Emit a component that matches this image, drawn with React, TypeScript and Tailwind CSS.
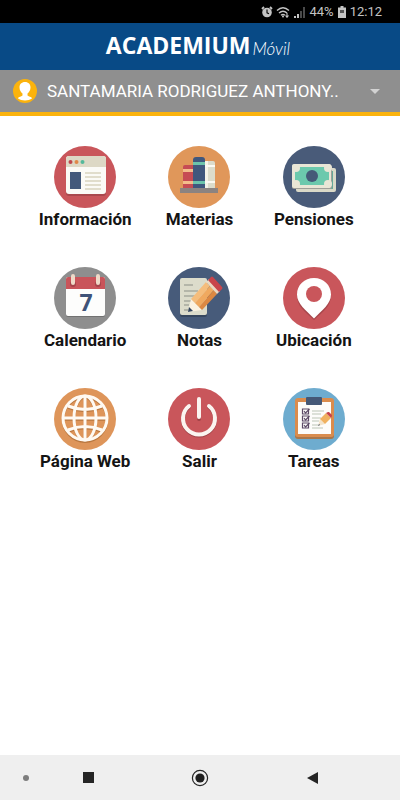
import React, { useState } from 'react';

function InfoIcon() {
  return (
    <svg viewBox="0 0 62 62" className="size-full">
      <circle cx="31" cy="31" r="31" fill="#c9565b" />
      <rect x="12" y="12" width="40" height="38" rx="3" fill="#a9484d" />
      <rect x="12" y="10" width="40" height="38" rx="3" fill="#fbfaf6" />
      <path d="M12 21v-8a3 3 0 0 1 3-3h34a3 3 0 0 1 3 3v8z" fill="#ddd8c5" />
      <circle cx="16.5" cy="16" r="2" fill="#c0474d" />
      <circle cx="22.5" cy="16" r="2" fill="#e0884a" />
      <circle cx="28.5" cy="16" r="2" fill="#55b99b" />
      <rect x="16" y="26" width="11" height="17" fill="#44597b" />
      <path d="M31 27h16M31 31h16M31 35h16M31 39h16M31 43h16" stroke="#d9d4be" strokeWidth="1.4" />
    </svg>
  );
}

function BooksIcon() {
  return (
    <svg viewBox="0 0 62 62" className="size-full">
      <circle cx="31" cy="31" r="31" fill="#e0975a" />
      <path d="M15 42V21q0-2 2-2h8v23z" fill="#c64c54" />
      <path d="M15 23h10v3H15zM15 35h10v3H15z" fill="#f3bd8b" />
      <path d="M25 42V14q0-3 3-3h6q3 0 3 3v28z" fill="#40577d" />
      <path d="M25 16h12v3H25zM25 35h12v3H25z" fill="#6bc3ab" />
      <path d="M37 42V15h8q2 0 2 2v25z" fill="#dcdccb" />
      <path d="M37 15h3v27h-3z" fill="#f5f3e8" />
      <path d="M37 20h10M37 36h10" stroke="#fbfaf3" strokeWidth="2" />
      <rect x="12" y="42" width="38" height="5" fill="#8c8380" />
    </svg>
  );
}

function MoneyIcon() {
  return (
    <svg viewBox="0 0 62 62" className="size-full">
      <circle cx="31" cy="31" r="31" fill="#495b79" />
      <rect x="13" y="22" width="40" height="24" rx="2" fill="#dad9c8" />
      <rect x="16" y="25" width="34" height="18" fill="#66a99a" />
      <rect x="9" y="19" width="40" height="24" rx="2" fill="#9f9f99" />
      <rect x="9" y="18" width="39" height="24" rx="2" fill="#e9e6d6" />
      <rect x="12" y="21" width="34" height="18" fill="#6cc9ad" />
      <circle cx="13" cy="22" r="4" fill="#e9e6d6" />
      <circle cx="45" cy="22" r="4" fill="#e9e6d6" />
      <circle cx="13" cy="38" r="4" fill="#e9e6d6" />
      <circle cx="45" cy="38" r="4" fill="#e9e6d6" />
      <circle cx="29" cy="30" r="6" fill="#455a78" />
    </svg>
  );
}

function CalendarIcon() {
  return (
    <svg viewBox="0 0 62 62" className="size-full">
      <circle cx="31" cy="31" r="31" fill="#8e8e8e" />
      <rect x="12" y="12" width="39" height="38" rx="2" fill="#717171" />
      <rect x="12" y="10" width="39" height="39" rx="2" fill="#fdfdfc" />
      <path d="M12 22V12q0-2 2-2h35q2 0 2 2v10z" fill="#c9545a" />
      <circle cx="19" cy="17" r="3" fill="#a6434a" />
      <circle cx="44" cy="17" r="3" fill="#a6434a" />
      <path d="M19 9v7M44 9v7" stroke="#efd9c8" strokeWidth="4" strokeLinecap="round" />
      <text
        x="32"
        y="44"
        textAnchor="middle"
        className="font-['Open_Sans',sans-serif] text-[23px] font-bold"
        fill="#3f5378"
      >
        7
      </text>
    </svg>
  );
}

function NotesIcon() {
  return (
    <svg viewBox="0 0 62 62" className="size-full">
      <circle cx="31" cy="31" r="31" fill="#475b7a" />
      <rect x="12" y="12" width="27" height="38" rx="2" fill="#36475f" />
      <rect x="12" y="11" width="27" height="37" rx="2" fill="#dcdccb" />
      <path d="M16 18h9M16 24h14M16 29h11M16 34h8M16 38h5M16 43h5" stroke="#8b8f88" strokeWidth="1.2" />
      <path d="M20 45l3-13 11 11z" fill="#fbf3e2" />
      <path d="M20 45l1-5 4 4z" fill="#34465f" />
      <path d="M23 32l15-17 4 4-15 17z" fill="#f5bd7c" />
      <path d="M27 36l15-17 4 4-15 17z" fill="#f0a95f" />
      <path d="M31 40l15-17 3 4-15 16z" fill="#dc8842" />
      <path d="M38 15l3-3 11 12-3 3z" fill="#ead9c2" />
      <path d="M40 13l3-3q1-1 2 0l9 10q1 1 0 2l-3 3z" fill="#c8444a" />
    </svg>
  );
}

function PinIcon() {
  return (
    <svg viewBox="0 0 62 62" className="size-full">
      <circle cx="31" cy="31" r="31" fill="#c9565b" />
      <path
        d="M31 13c-9.500 0-17 7-17 16 0 10 8 16 17 24 9-8 17-14 17-24 0-9-7.500-16-17-16z"
        fill="#a9474c"
      />
      <path
        d="M31 11c-9.500 0-17 7-17 16.500C14 37 23 43 31 51.500 39 43 48 37 48 27.500 48 18 40.500 11 31 11z"
        fill="#fff"
      />
      <circle cx="31" cy="27" r="8" fill="#c9565b" />
    </svg>
  );
}

function GlobeLines() {
  return (
    <>
      <circle cx="31" cy="30" r="22" />
      <ellipse cx="31" cy="30" rx="11" ry="22" />
      <path d="M31 8v44M9 30h44M14 18q17 7 34 0M14 42q17-7 34 0" />
    </>
  );
}

function GlobeIcon() {
  return (
    <svg viewBox="0 0 62 62" className="size-full">
      <circle cx="31" cy="31" r="31" fill="#de955a" />
      <g fill="none" stroke="#b9773f" strokeWidth="2.500" transform="translate(0 1.500)">
        <GlobeLines />
      </g>
      <g fill="none" stroke="#fffaf3" strokeWidth="3">
        <GlobeLines />
      </g>
    </svg>
  );
}

function PowerIcon() {
  return (
    <svg viewBox="0 0 62 62" className="size-full">
      <circle cx="31" cy="31" r="31" fill="#c9565b" />
      <g fill="none" strokeWidth="4" strokeLinecap="round">
        <path d="M21 19a16 16 0 1 0 20 0M31 13v18" stroke="#9f4247" />
        <path d="M21 18a16 16 0 1 0 20 0M31 11v18" stroke="#fbf4f0" />
      </g>
    </svg>
  );
}

function TasksIcon() {
  return (
    <svg viewBox="0 0 62 62" className="size-full">
      <circle cx="31" cy="31" r="31" fill="#6eaccf" />
      <rect x="12" y="12" width="39" height="39" rx="3" fill="#a9764a" />
      <rect x="12" y="10" width="39" height="39" rx="3" fill="#da8c4d" />
      <rect x="15" y="14" width="33" height="32" fill="#fdfcfa" />
      <rect x="23" y="9" width="16" height="8" rx="1" fill="#455876" />
      <g fill="none" stroke="#5c4a66" strokeWidth="1.200">
        <path d="M19.500 21h6v5h-6zM19.500 28h6v5h-6zM19.500 35h6v5h-6z" />
        <path d="M21 23l1.500 2 4-4M21 30l1.500 2 4-4M21 37l1.500 2 4-4" />
      </g>
      <path d="M29 23h12M29 26h9M29 30h9M29 33h7M29 37h6M29 40h11" stroke="#bcc5b6" strokeWidth="1" />
      <path d="M35 38l2-7 5 5z" fill="#f3e3c9" />
      <path d="M35 38l1-2 1 1z" fill="#34465f" />
      <path d="M37 31l6-6 5 5-6 6z" fill="#f0b15f" />
      <path d="M43 25l2-1h1l3 3v1l-1 2z" fill="#c8444a" />
    </svg>
  );
}

const menuItems = [
  { label: 'Información', Icon: InfoIcon },
  { label: 'Materias', Icon: BooksIcon },
  { label: 'Pensiones', Icon: MoneyIcon },
  { label: 'Calendario', Icon: CalendarIcon },
  { label: 'Notas', Icon: NotesIcon },
  { label: 'Ubicación', Icon: PinIcon },
  { label: 'Página Web', Icon: GlobeIcon },
  { label: 'Salir', Icon: PowerIcon },
  { label: 'Tareas', Icon: TasksIcon },
];

function StatusBar() {
  return (
    <div className="flex h-[23px] items-center justify-end gap-1 bg-black pr-[18px] text-[#c4c4c4]">
      <div className="flex items-center gap-[2px]">
        {/* alarma */}
        <svg viewBox="0 0 12 12" className="size-3">
          <circle cx="6" cy="6.500" r="4.800" fill="currentColor" />
          <path d="M1 3l2-2M11 3L9 1" stroke="currentColor" strokeWidth="1.800" />
          <path d="M6 3.500v3.300l2 1" fill="none" stroke="#000" strokeWidth="1.100" />
        </svg>
        {/* wifi */}
        <svg viewBox="0 0 16 12" className="h-3 w-4">
          <path
            d="M2 4.500q6-5.500 12 0M4 7q4-3.600 8 0M6 9.300q2-1.800 4 0"
            fill="none"
            stroke="currentColor"
            strokeWidth="1.400"
          />
          <circle cx="8" cy="10.500" r="1" fill="currentColor" />
          <path d="M12 7v4M10.500 9.500l1.500 1.800 1.500-1.800" fill="none" stroke="currentColor" strokeWidth="1.100" />
        </svg>
        {/* señal */}
        <svg viewBox="0 0 12 12" className="size-3">
          <path d="M1 10h2v2H1zM4 8h2v4H4z" fill="currentColor" />
          <path d="M7 5h2v7H7zM10 1h2v11h-2z" fill="#4a4a4a" />
        </svg>
      </div>
      <span className="text-[13px] leading-4">44%</span>
      <svg viewBox="0 0 8 12" className="h-3 w-2">
        <path d="M2.500 0h3v1.500H8V12H0V1.500h2.500z" fill="currentColor" />
        <path d="M2 4h4v3H2z" fill="#555" />
      </svg>
      <span className="text-[13px] leading-4">12:12</span>
    </div>
  );
}

function NavigationBar() {
  return (
    <nav className="grid h-[45px] grid-cols-[32px_1fr_1fr_1fr_32px] items-center justify-items-center bg-[#efefef]">
      <span className="mr-[3px] size-[6px] justify-self-end rounded-full bg-[#7d7d7d]" />
      <button aria-label="Recientes" className="p-3">
        <span className="block size-[11px] bg-[#252525]" />
      </button>
      <button aria-label="Inicio" className="p-2">
        <svg viewBox="0 0 18 18" className="size-[18px]">
          <circle cx="9" cy="9" r="7.600" fill="none" stroke="#252525" strokeWidth="1.200" />
          <circle cx="9" cy="9" r="4.600" fill="#1f1f1f" />
        </svg>
      </button>
      <button aria-label="Atrás" className="p-3">
        <svg viewBox="0 0 12 12" className="size-3">
          <path d="M12 0v12L1 6z" fill="#252525" />
        </svg>
      </button>
    </nav>
  );
}

export default function App() {
  const [student, setStudent] = useState('1');

  return (
    <div className="flex min-h-screen flex-col bg-white font-[Roboto,sans-serif]">
      <StatusBar />

      <header className="flex h-[47px] items-center justify-center gap-[2px] bg-[#084a86] pr-1 pb-1 text-white">
        <h1 className="font-['Open_Sans',sans-serif] text-[23px] leading-7 font-bold">ACADEMIUM</h1>
        <span className="pt-2 font-[Lato,sans-serif] text-[17px] leading-6 font-light italic">Móvil</span>
      </header>

      {/* selector de alumno */}
      <div className="flex h-[46px] items-center border-b-4 border-[#fbb30d] bg-[#8f8f8f] pr-5 pl-[13px]">
        <svg viewBox="0 0 24 24" className="size-6 shrink-0">
          <circle cx="12" cy="12" r="12" fill="#fbb30d" />
          <path
            d="M12 3c-3.500 0-5.500 2.300-5.500 5.500 0 2.700 1.500 4.700 3 6v2c-1.500 1-3.500 1.300-4.700 2.700 4 3 10.400 3 14.400 0-1.200-1.400-3.200-1.700-4.700-2.700v-2c1.500-1.300 3-3.300 3-6C17.500 5.300 15.500 3 12 3z"
            fill="#fff"
          />
        </svg>
        <select
          aria-label="Alumno"
          value={student}
          onChange={(e) => setStudent(e.target.value)}
          className="ml-[10px] min-w-0 flex-1 appearance-none bg-transparent text-[17px] leading-6 text-white outline-none"
        >
          <option value="1">SANTAMARIA RODRIGUEZ ANTHONY..</option>
        </select>
        <svg viewBox="0 0 10 5" className="h-[5px] w-[10px] shrink-0">
          <path d="M0 0h10L5 5z" fill="#d2d2d2" />
        </svg>
      </div>

      <main className="flex-1 pt-[30px] pr-[29px] pl-7">
        <div className="grid grid-cols-3 gap-y-[37px]">
          {menuItems.map(({ label, Icon }) => (
            <button key={label} className="flex flex-col items-center">
              <span className="size-[62px]">
                <Icon />
              </span>
              <span className="text-[17px] leading-[22px] font-bold whitespace-nowrap text-[#141414]">
                {label}
              </span>
            </button>
          ))}
        </div>
      </main>

      <NavigationBar />
    </div>
  );
}
